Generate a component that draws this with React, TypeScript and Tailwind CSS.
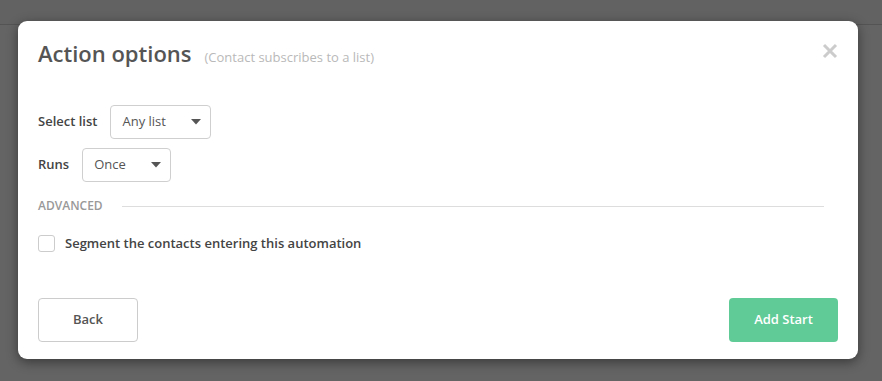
import React from "react";

function Caret() {
  return (
    <svg width="10" height="6" viewBox="0 0 10 6" className="block">
      <path d="M0 0 L10 0 L5 5.5 Z" fill="#555" />
    </svg>
  );
}

function SelectBox({ value, width }: { value: string; width: string }) {
  return (
    <div
      className={`flex h-[34px] items-center justify-between rounded-[4px] border border-[#cfcfcf] bg-white pl-[11px] pr-[9px] text-[13px] text-[#555] ${width}`}
    >
      <span>{value}</span>
      <Caret />
    </div>
  );
}

export default function App() {
  return (
    <div
      className="relative h-[381px] w-[882px] overflow-hidden bg-[#646464]"
      style={{ fontFamily: '"Open Sans", "Liberation Sans", sans-serif' }}
    >
      <div className="h-[25px] border-b border-[#545454] bg-[#626262]" />
      <div className="absolute left-[18px] top-[21px] flex h-[338px] w-[840px] flex-col rounded-[9px] bg-white px-[20px] pt-[17px] pb-[17px] shadow-[0_3px_12px_rgba(0,0,0,0.45)]">
        <div className="flex h-[30px] items-center justify-between">
          <div className="flex items-baseline">
            <span className="text-[22px] font-semibold text-[#555] leading-[30px]">Action options</span>
            <span className="ml-[13px] text-[13px] text-[#b9b9b9]">(Contact subscribes to a list)</span>
          </div>
          <svg width="16" height="16" viewBox="0 0 16 16" className="mt-[-4px]">
            <path d="M2 2 L14 14 M14 2 L2 14" stroke="#cccccc" strokeWidth="3" strokeLinecap="butt" />
          </svg>
        </div>

        <div className="mt-[37px] flex items-center">
          <span className="mr-[13px] text-[13px] font-semibold text-[#444]">Select list</span>
          <SelectBox value="Any list" width="w-[101px]" />
        </div>
        <div className="mt-[9px] flex items-center">
          <span className="mr-[13px] text-[13px] font-semibold text-[#444]">Runs</span>
          <SelectBox value="Once" width="w-[89px]" />
        </div>

        <div className="mt-[16px] flex h-[16px] items-center">
          <span className="text-[12px] font-semibold text-[#999]">ADVANCED</span>
          <div className="ml-[19px] mr-[14px] h-px flex-1 bg-[#dddddd]" />
        </div>

        <div className="mt-[20px] flex items-center">
          <div className="h-[17px] w-[17px] rounded-[3px] border border-[#cccccc] bg-white" />
          <span className="ml-[10px] text-[13px] font-semibold text-[#444]">
            Segment the contacts entering this automation
          </span>
        </div>

        <div className="mt-auto flex items-center justify-between">
          <button className="h-[44px] w-[100px] rounded-[4px] border border-[#cccccc] bg-white text-[13px] font-semibold text-[#555]">
            Back
          </button>
          <button className="h-[44px] w-[109px] rounded-[4px] bg-[#60cb97] text-[13px] font-semibold text-white">
            Add Start
          </button>
        </div>
      </div>
    </div>
  );
}
